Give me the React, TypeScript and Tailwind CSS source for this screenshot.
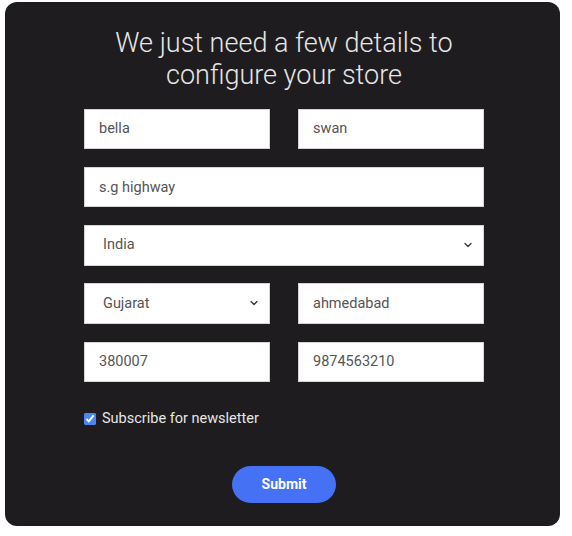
import { ChevronDown } from 'lucide-react';

const inputClass =
    'h-[40.5px] w-full border border-[#d4d4d4] bg-white px-[14px] text-[14.5px] text-[#555] outline-none';

export default function App() {
    return (
        <div className="min-h-[536px] bg-white pl-[5px] pt-[2px] font-['Roboto',sans-serif]">
            <div className="flex h-[524px] w-[555px] flex-col items-center rounded-[12px] bg-[#1e1c1f] pl-[3px] pt-[25px]">
                {/* Heading */}
                <h1 className="text-center text-[27px] font-light leading-[32px] text-[#e6e6e6]">
                    We just need a few details to
                    <br />
                    configure your store
                </h1>

                {/* Form */}
                <form className="mt-[17.5px] grid w-[400px] grid-cols-2 gap-x-[28px] gap-y-[17.75px]">
                    <input className={inputClass} defaultValue="bella" />
                    <input className={inputClass} defaultValue="swan" />
                    <input className={`${inputClass} col-span-2`} defaultValue="s.g highway" />

                    <div className="relative col-span-2">
                        <select className={`${inputClass} appearance-none pl-[18px]`} defaultValue="India">
                            <option>India</option>
                        </select>
                        <ChevronDown className="pointer-events-none absolute right-[10px] top-[14px] h-3 w-3 text-[#333]" strokeWidth={2.5} />
                    </div>

                    <div className="relative">
                        <select className={`${inputClass} appearance-none pl-[18px]`} defaultValue="Gujarat">
                            <option>Gujarat</option>
                        </select>
                        <ChevronDown className="pointer-events-none absolute right-[10px] top-[14px] h-3 w-3 text-[#333]" strokeWidth={2.5} />
                    </div>
                    <input className={inputClass} defaultValue="ahmedabad" />

                    <input className={inputClass} defaultValue="380007" />
                    <input className={inputClass} defaultValue="9874563210" />

                    <label className="col-span-2 mt-[9px] flex items-center gap-[6px] text-[14.5px] leading-5 text-[#e6e6e6]">
                        <input type="checkbox" defaultChecked className="m-0 h-[12px] w-[12px] accent-[#4a86f0]" />
                        Subscribe for newsletter
                    </label>
                </form>

                <button
                    type="button"
                    className="mt-[37px] h-[37px] w-[104px] rounded-full bg-[#4571f5] text-[14px] font-bold text-white"
                >
                    Submit
                </button>
            </div>
        </div>
    );
}
